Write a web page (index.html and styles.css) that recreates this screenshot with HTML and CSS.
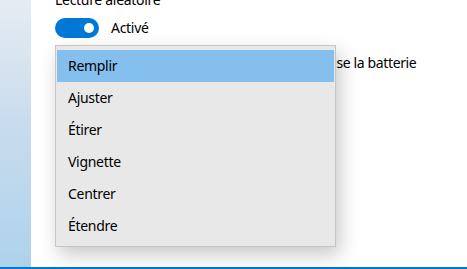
FILE: index.html
```html
<!DOCTYPE html>
<html lang="fr">
<head>
  <meta charset="UTF-8">
  <title>Arrière-plan</title>
  <link rel="stylesheet" href="styles.css">
</head>
<body>

<div class="window">
  <div class="sidebar"></div>

  <div class="content">
    <div class="label">Lecture aléatoire</div>
    <div class="toggle-row">
      <div class="toggle"><span class="knob"></span></div>
      <span class="toggle-text">Activé</span>
    </div>
    <div class="option-row">Autoriser les diaporamas même lorsque j'utilise la batterie</div>

    <!-- open dropdown over the settings -->
    <ul class="dropdown">
      <li class="selected">Remplir</li>
      <li>Ajuster</li>
      <li>Étirer</li>
      <li>Vignette</li>
      <li>Centrer</li>
      <li>Étendre</li>
    </ul>
  </div>
</div>
<div class="bottom-bar"></div>

</body>
</html>
```

FILE: styles.css
```css
* {
  margin: 0;
  padding: 0;
  box-sizing: border-box;
}
body {
  width: 467px;
  height: 269px;
  overflow: hidden;
  font-family: 'Noto Sans', 'Open Sans', sans-serif;
  font-size: 14px;
  letter-spacing: -0.3px;
  color: #000;
  background: #fff;
  display: flex;
  flex-direction: column;
}
.window {
  flex: 1;
  display: flex;
}
.sidebar {
  width: 31px;
  background: linear-gradient(180deg, #e6ecf3 0%, #c9dced 45%, #aed2ec 100%);
}
.content {
  position: relative;
  flex: 1;
  padding-left: 24px;
}
.label {
  margin-top: -10px;
  height: 20px;
  line-height: 20px;
}
.toggle-row {
  display: flex;
  align-items: center;
  height: 20px;
  margin-top: 8px;
}
.toggle {
  width: 44px;
  height: 20px;
  border-radius: 10px;
  background: #0078d7;
  position: relative;
}
.knob {
  position: absolute;
  right: 5px;
  top: 5px;
  width: 10px;
  height: 10px;
  border-radius: 50%;
  background: #fff;
}
.toggle-text {
  margin-left: 12px;
  margin-top: -1px;
}
.option-row {
  margin-top: 15px;
  line-height: 20px;
  white-space: nowrap;
  letter-spacing: -0.37px;
}
.dropdown {
  position: absolute;
  left: 24px;
  top: 45px;
  width: 281px;
  list-style: none;
  padding: 4px 1px;
  background: #e8e8e8;
  border: 1px solid #c6c6c6;
  box-shadow: 4px 8px 18px rgba(0, 0, 0, 0.22);
}
.dropdown li {
  height: 32px;
  line-height: 31px;
  padding-left: 11px;
}
.dropdown li.selected {
  background: #84bfee;
}
.bottom-bar {
  height: 2px;
  background: #0078d7;
}
```
